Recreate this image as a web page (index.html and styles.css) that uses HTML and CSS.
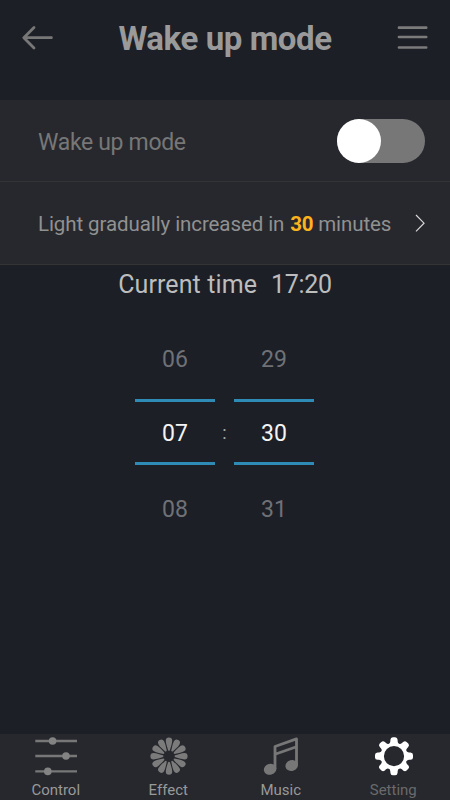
FILE: index.html
```html
<!DOCTYPE html>
<html lang="en">
<head>
<meta charset="utf-8">
<title>Wake up mode</title>
<link rel="stylesheet" href="styles.css">
</head>
<body>
<div class="app">
  <header class="header">
    <svg class="icon-back" width="32" height="26" viewBox="0 0 32 26"><path d="M13 2.5 2.8 12.7 13 22.9M3 12.7H30.4" fill="none" stroke="#777" stroke-width="2.8" stroke-linecap="round" stroke-linejoin="round"/></svg>
    <h1 class="title"><span>Wake up mode</span></h1>
    <svg class="icon-menu" width="32" height="26" viewBox="0 0 32 26"><path d="M2 2.7H29.2M2 12H29.2M2 22.5H29.2" fill="none" stroke="#7b7b7b" stroke-width="2.7" stroke-linecap="round"/></svg>
  </header>
  <main class="main">
    <section class="row row-toggle">
      <span class="row-title">Wake up mode</span>
      <span class="switch"><span class="knob"></span></span>
    </section>
    <section class="row row-link">
      <span class="row-text">Light gradually increased in <b>30</b> minutes</span>
      <svg class="chevron" width="12" height="20" viewBox="0 0 12 20"><path d="M3 2 11 10.2 3 18.4" fill="none" stroke="#d8d8d8" stroke-width="1.2"/></svg>
    </section>
    <p class="current"><span>Current time</span><span class="clock">17:20</span></p>
    <section class="picker">
      <div class="wheel">
        <span class="dim">06</span>
        <span class="selected">07</span>
        <span class="dim dim-next">08</span>
      </div>
      <span class="colon">:</span>
      <div class="wheel">
        <span class="dim">29</span>
        <span class="selected">30</span>
        <span class="dim dim-next">31</span>
      </div>
    </section>
  </main>
  <nav class="tabs">
    <a class="tab">
      <svg width="44" height="40" viewBox="0 0 44 40"><g stroke="#777" stroke-width="2.4"><path d="M1.3 5H43M1.3 20H43M1.3 35.4H43"/></g><g fill="#838383"><circle cx="18.6" cy="5" r="3.8"/><circle cx="32" cy="20" r="3.8"/><circle cx="13.8" cy="35.4" r="3.8"/></g></svg>
      <span>Control</span>
    </a>
    <a class="tab">
      <svg width="44" height="40" viewBox="-22 -20.2 44 40">
        <defs><path id="petal" d="M-.9-6C-1.6-8.5-3.2-12.5-3.2-15.4A3.2 3.2 0 0 1 3.2-15.4C3.2-12.5 1.6-8.5 .9-6Q0-5-.9-6Z"/></defs>
        <g fill="#7b7b7b">
          <use href="#petal"/><use href="#petal" transform="rotate(30)"/><use href="#petal" transform="rotate(60)"/><use href="#petal" transform="rotate(90)"/><use href="#petal" transform="rotate(120)"/><use href="#petal" transform="rotate(150)"/><use href="#petal" transform="rotate(180)"/><use href="#petal" transform="rotate(210)"/><use href="#petal" transform="rotate(240)"/><use href="#petal" transform="rotate(270)"/><use href="#petal" transform="rotate(300)"/><use href="#petal" transform="rotate(330)"/>
        </g>
      </svg>
      <span>Effect</span>
    </a>
    <a class="tab">
      <svg width="44" height="40" viewBox="0 0 44 40"><path d="M16 33V10.5L37.5 2.9V29M16 18.3 37.5 10.7" fill="none" stroke="#777" stroke-width="2.8" stroke-linejoin="round"/><g fill="#777"><ellipse cx="11.1" cy="33.3" rx="6.3" ry="5.4" transform="rotate(-15 11.1 33.3)"/><ellipse cx="32.7" cy="29.5" rx="6.3" ry="5.4" transform="rotate(-15 32.7 29.5)"/></g></svg>
      <span>Music</span>
    </a>
    <a class="tab active">
      <svg width="44" height="40" viewBox="-22 -20.2 44 40">
        <defs><path id="tooth" d="M-5.6-11.5C-4-13-3.6-14-3.6-16.5Q-3.4-19-1.2-19H1.2Q3.4-19 3.6-16.5C3.6-14 4-13 5.6-11.5Z"/></defs>
        <g fill="#fff">
          <use href="#tooth"/><use href="#tooth" transform="rotate(45)"/><use href="#tooth" transform="rotate(90)"/><use href="#tooth" transform="rotate(135)"/><use href="#tooth" transform="rotate(180)"/><use href="#tooth" transform="rotate(225)"/><use href="#tooth" transform="rotate(270)"/><use href="#tooth" transform="rotate(315)"/>
        </g>
        <circle r="11.8" fill="#27282d" stroke="#fff" stroke-width="3.4"/>
      </svg>
      <span>Setting</span>
    </a>
  </nav>
</div>
</body>
</html>
```
FILE: styles.css
```css
* { box-sizing: border-box; }
body { margin: 0; background: #1c1f26; font-family: Roboto, sans-serif; }
.app { width: 450px; height: 800px; display: flex; flex-direction: column; overflow: hidden; }
.header { height: 100px; padding: 18px 21px 0; display: flex; align-items: flex-start; justify-content: space-between; }
.icon-back, .icon-menu { display: block; margin-top: 7px; }
.title { margin: 0; padding-top: 1px; font-size: 33px; letter-spacing: -0.42px; line-height: 40px; font-weight: 700; color: #9a9a9a; white-space: nowrap; }
.main { flex: 1; }
.row { display: flex; align-items: center; justify-content: space-between; height: 82px; padding: 0 25px 0 38px; background: #27282d; border-bottom: 1px solid #343434; }
.row-link { height: 83px; }
.row-title { padding-top: 3px; font-size: 23px; letter-spacing: -0.33px; color: #777; }
.row-text { padding-top: 2px; font-size: 20.5px; letter-spacing: -0.09px; color: #919191; white-space: nowrap; }
.row-text b { margin-left: 1px; letter-spacing: -0.3px; color: #fbb41b; }
.switch { width: 88px; height: 44px; border-radius: 22px; background: #777; display: flex; }
.knob { width: 44px; height: 44px; border-radius: 50%; background: #fff; }
.current { margin: 0; padding-top: 1px; display: flex; justify-content: center; gap: 14px; font-size: 25px; letter-spacing: 0.1px; line-height: 38px; color: #bdbdbd; }
.clock { letter-spacing: -0.3px; }
.picker { display: flex; justify-content: center; margin: 18px 1px 0 0; }
.wheel { width: 80px; display: flex; flex-direction: column; text-align: center; font-size: 23px; }
.dim { height: 77px; line-height: 76px; color: #707176; }
.dim-next { line-height: 90px; }
.selected { height: 66px; border: solid #2d8bb5; border-width: 3px 0; line-height: 64px; color: #f4f4f4; }
.colon { width: 19px; padding-top: 78px; line-height: 66px; text-align: center; font-size: 18px; color: #aaa; }
.switch { margin-top: 1px; }
.tabs { height: 66px; display: grid; grid-template-columns: repeat(4, 1fr); background: #27282d; }
.tab { display: flex; flex-direction: column; align-items: center; padding-top: 2px; font-size: 15px; line-height: 20px; color: #999; }
.tab svg { display: block; flex: none; }
.tab span { margin: 4px 1px 0 0; }
.active { color: #6a6a6a; }
```
